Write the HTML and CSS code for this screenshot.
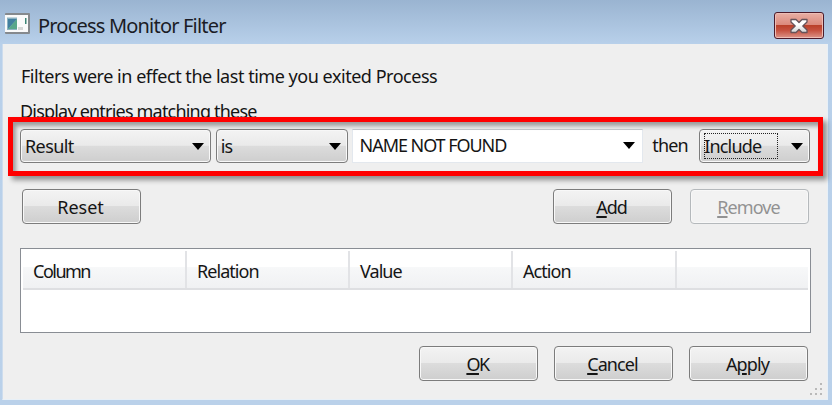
FILE: index.html
```html
<!DOCTYPE html>
<html lang="en">
<head>
<meta charset="utf-8">
<title>Process Monitor Filter</title>
<link rel="stylesheet" href="styles.css">
</head>
<body>
<div class="window">
  <header class="titlebar">
    <svg class="app-icon" width="25" height="22" viewBox="0 0 25 22">
      <rect x="0" y="0" width="25" height="21" rx="1" fill="#85898d"/>
      <rect x="0" y="2" width="23" height="17" fill="#fafafa"/>
      <rect x="2" y="4.500" width="10" height="12.500" fill="#8bb2c1"/>
      <path d="M3 6h9L3 16z" fill="#427f9f"/><path d="M12 6v10H3z" fill="#58a68a"/>
      <path d="M20 5h1.500v6H20z" fill="#3c8575"/><path d="M13 14h5v3h-5z" fill="#d5d5d5"/>
    </svg>
    <h1 class="title">Process Monitor Filter</h1>
    <button class="close" aria-label="Close">
      <svg width="20" height="16" viewBox="0 0 20 16">
        <defs><linearGradient id="x" x2="0" y2="1"><stop offset=".4" stop-color="#fff"/><stop offset="1" stop-color="#d2d2d2"/></linearGradient></defs>
        <path d="M2 1.500h5L10 4.500 13 1.500h5v2.500L13.800 8 18 12v2.500h-5L10 11.500 7 14.500H2V12L6.200 8 2 4z" fill="url(#x)" stroke="#65535a" stroke-width="1.300" stroke-linejoin="round"/>
      </svg>
    </button>
  </header>
  <main class="client">
    <p class="note">Filters were in effect the last time you exited Process</p>
    <p class="label">Display entries matching these</p>
    <div class="filter">
      <div class="combo column"><span class="t-result">Result</span><i class="arrow"></i></div>
      <div class="combo relation"><span>is</span><i class="arrow"></i></div>
      <div class="edit"><span class="t-value">NAME NOT FOUND</span><i class="arrow"></i></div>
      <span class="then">then</span>
      <div class="combo action"><span class="focus">Include</span><i class="arrow"></i></div>
      <div class="highlight"></div>
    </div>
    <div class="actions">
      <button class="btn reset">Reset</button>
      <button class="btn add"><u>A</u>dd</button>
      <button class="btn remove" disabled><u>R</u>emove</button>
    </div>
    <div class="list">
      <div class="head"><span class="t-column">Column</span><span>Relation</span><span>Value</span><span>Action</span><span></span></div>
    </div>
    <div class="footer">
      <button class="btn ok"><u>O</u>K</button>
      <button class="btn cancel"><u>C</u>ancel</button>
      <button class="btn apply">A<u>p</u>ply</button>
    </div>
    <svg class="grip" width="13" height="13" viewBox="0 0 13 13" fill="#b9b9b9"><path d="M10 0h2v2h-2zM5 5h2v2H5zM10 5h2v2h-2zM0 10h2v2H0zM5 10h2v2H5zM10 10h2v2h-2z"/></svg>
  </main>
</div>
</body>
</html>
```

FILE: styles.css
```css
* { box-sizing: border-box; }
body { margin: 0; overflow: hidden; }
.window {
  width: 832px; height: 405px; padding: 0 4px 0 2px;
  background: linear-gradient(#9ab4d1 0, #b8d0ea 44px, #bad1ea 100%);
  font: 18px/24px "Noto Sans", sans-serif;
  letter-spacing: -0.8px;
  color: #151515;
}
.titlebar { display: flex; align-items: flex-start; height: 44px; padding: 12px 0 0 3px; }
.app-icon { margin-top: 1px; }
.title { margin: 0 auto 0 8px; font-size: 20px; font-weight: 400; line-height: 28px; letter-spacing: -0.8px; color: #1b1c25; }
.close {
  display: flex; align-items: center; justify-content: center;
  width: 50px; height: 27px; margin-right: 4px; padding: 0;
  border: 1px solid #4d1b2a; border-radius: 3px;
  background: linear-gradient(#e9afa4, #dc8b7e 46%, #b83e27 47%, #c65240 70%, #dc9489);
  box-shadow: inset 0 0 0 1px #edbdb5;
}
.client {
  position: relative; height: 356px; padding: 20px 17px 0 17px;
  background: #efefef; border: 1px solid #e8f0f7; border-top: 0; border-left-color: #cddced;
}
.note, .label { margin: 0; white-space: nowrap; height: 24px; }
.note { margin-left: 1px; letter-spacing: -0.47px; }
.label { margin-top: 11px; }
.filter { position: relative; display: flex; align-items: center; height: 34px; margin-top: 6px; }
.combo, .edit { display: flex; align-items: center; justify-content: space-between; height: 34px; padding: 0 6px 0 4px; }
.combo, .btn {
  border: 1px solid #7c7c7c; border-radius: 4px;
  background: linear-gradient(#f3f3f3, #eaeaea 48%, #dcdcdc 50%, #cecece);
  box-shadow: inset 0 0 0 1px #f8f8f8;
}
.column { width: 191px; letter-spacing: -0.6px; }
.relation { width: 132px; margin-left: 5px; }
.edit { width: 292px; margin-left: 4px; padding: 0 7px 1px; border: 1px solid #e3e8ee; border-top-color: #c5c8cc; background: #fff; }
.t-value { margin-top: -1px; letter-spacing: -1.05px; }
.then { width: 36px; margin: -3px 11px 0 9px; }
.action { width: 111px; }
.focus { width: 74px; height: 26px; margin-top: -1px; line-height: 26px; outline: 1px dotted #222; outline-offset: -1px; }
.arrow { width: 0; height: 0; border: 6px solid transparent; border-top: 7px solid #000; border-bottom: 0; }
.highlight {
  position: absolute; left: -12px; top: -12px; width: 815px; height: 59px;
  border: 5px solid #f00;
  box-shadow: 4px 4px 5px rgba(0,0,0,.4), inset 3px 4px 4px rgba(0,0,0,.35);
  pointer-events: none;
}
.actions { display: flex; margin: 26px 0 0 2px; }
.btn { width: 119px; height: 35px; padding: 0 2px 0 0; font: inherit; letter-spacing: -0.9px; color: #151515; }
.btn u { text-decoration-thickness: 1.500px; text-underline-offset: 2px; }
.reset { letter-spacing: 0; }
.add { margin-left: auto; margin-right: 18px; letter-spacing: -1.1px; }
.remove { margin-right: 1px; border-color: #b5b9bc; background: #f2f2f2; color: #929292; }
.ok { letter-spacing: -1.5px; }
.list { height: 85px; margin: 24px -1px 0 0; padding: 2px; border: 1px solid #898d94; background: #fff; }
.head { display: grid; grid-template-columns: 164px 163px 163px 164px 1fr; height: 39px; border-bottom: 2px solid #dedfe2; background: linear-gradient(#fff 42%, #f7f8f9 43%, #f0f1f3); }
.head span { padding: 8px 0 0 10px; border-right: 2px solid #e2e3e6; letter-spacing: -0.95px; }
.head .t-column { letter-spacing: -1.5px; }
.head span:last-child { border: 0; }
.footer { display: flex; justify-content: flex-end; gap: 16px; margin: 13px 2px 0 0; }
.grip { position: absolute; right: 4px; bottom: 3px; }
```
